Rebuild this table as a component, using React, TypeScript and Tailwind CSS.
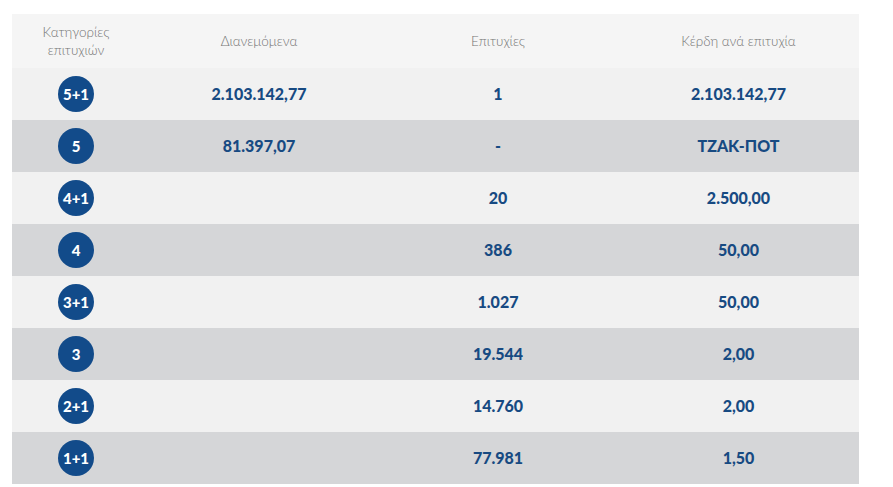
import React from "react";

const rows = [
  { cat: "5+1", pool: "2.103.142,77", wins: "1", prize: "2.103.142,77" },
  { cat: "5", pool: "81.397,07", wins: "-", prize: "ΤΖΑΚ-ΠΟΤ" },
  { cat: "4+1", pool: "", wins: "20", prize: "2.500,00" },
  { cat: "4", pool: "", wins: "386", prize: "50,00" },
  { cat: "3+1", pool: "", wins: "1.027", prize: "50,00" },
  { cat: "3", pool: "", wins: "19.544", prize: "2,00" },
  { cat: "2+1", pool: "", wins: "14.760", prize: "2,00" },
  { cat: "1+1", pool: "", wins: "77.981", prize: "1,50" },
];

const cols = "grid grid-cols-[128px_238px_240px_241px]";

export default function App() {
  return (
    <div className="h-[487px] w-[893px] overflow-hidden bg-white pt-[14px] pl-[12px] font-['Lato','Liberation_Sans',sans-serif]">
      <div className="w-[847px]">
        {/* header */}
        <div className={`${cols} h-[54px] items-center bg-[#f5f5f5] text-[13.5px] leading-[18px] font-light text-[#747474] text-center`}>
          <div>
            Κατηγορίες
            <br />
            επιτυχιών
          </div>
          <div>Διανεμόμενα</div>
          <div>Επιτυχίες</div>
          <div>Κέρδη ανά επιτυχία</div>
        </div>

        {rows.map((r, i) => (
          <div
            key={r.cat}
            className={`${cols} h-[52px] items-center text-center text-[16px] font-black text-[#174a82] ${
              i % 2 === 0 ? "bg-[#f1f1f1]" : "bg-[#d5d6d8]"
            }`}
          >
            <div className="flex justify-center">
              <span className="flex h-[36px] w-[36px] items-center justify-center rounded-full bg-[#124b8a] text-[15px] font-black text-white">
                {r.cat}
              </span>
            </div>
            <div>{r.pool}</div>
            <div>{r.wins}</div>
            <div>{r.prize}</div>
          </div>
        ))}
      </div>
    </div>
  );
}
